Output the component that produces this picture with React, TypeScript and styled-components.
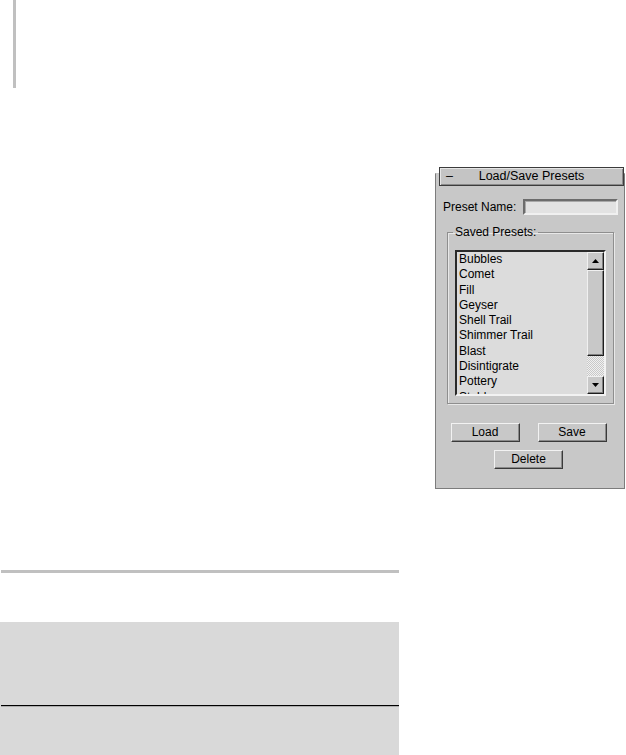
import React from "react";
import styled, { createGlobalStyle } from "styled-components";

const GlobalStyle = createGlobalStyle`
  html, body {
    margin: 0;
    padding: 0;
    background: #ffffff;
  }
  body {
    font-family: "Liberation Sans", Arial, sans-serif;
  }
`;

const Page = styled.div`
  display: flex;
  width: 626px;
  height: 755px;
  overflow: hidden;
  background: #ffffff;
`;

const LeftColumn = styled.div`
  width: 399px;
  display: flex;
  flex-direction: column;
`;

const MarginRule = styled.div`
  margin-left: 13px;
  width: 3px;
  height: 88px;
  background: #c0c0c0;
`;

const SectionRule = styled.div`
  margin: 482px 0 0 1px;
  height: 3px;
  background: #c0c0c0;
`;

const NoteBlock = styled.div`
  margin-top: 49px;
  flex: 1;
  background: #d9d9d9;
  padding-top: 83px;
`;

const NoteLine = styled.div`
  margin-left: 1px;
  height: 1px;
  background: #000000;
  box-shadow: 0 0.5px 0 rgba(0, 0, 0, 0.4);
`;

const RightColumn = styled.div`
  margin-left: 36px;
  padding-top: 173px;
`;

const Rollout = styled.div`
  width: 188px;
  height: 314px;
  background: #c8c8c8;
  border: 1px solid #7c7c7c;
  border-top-color: #c8c8c8;
  display: flex;
  flex-direction: column;
  font-size: 12px;
  color: #000;
`;

const TitleBar = styled.div`
  margin: -7px 0 0 3px;
  height: 17px;
  border: 1px solid #3c3c3c;
  box-shadow: inset 1px 1px 0 #e6e6e6, inset -1px -1px 0 #8a8a8a;
  background: #c4c4c4;
  display: flex;
  align-items: center;
  position: relative;
  justify-content: center;
  line-height: 17px;
  font-size: 12.5px;
`;

const Collapse = styled.span`
  position: absolute;
  left: 6px;
  top: 0;
`;

const NameRow = styled.div`
  margin: 13px 0 0 7px;
  display: flex;
  align-items: center;
  gap: 7px;
`;

const NameInput = styled.div`
  width: 91px;
  height: 12px;
  background: #e2e2e2;
  border: 2px solid;
  border-color: #6c6c6c #f0f0f0 #f0f0f0 #6c6c6c;
  box-shadow: inset 1px 1px 0 #a8a8a8;
`;

const GroupBox = styled.fieldset`
  margin: 10px 0 0 11px;
  width: 167px;
  height: 179px;
  padding: 0;
  border: 1px solid #8e8e8e;
  box-shadow: 1px 1px 0 #e8e8e8, inset 1px 1px 0 #e8e8e8;
  box-sizing: border-box;
  legend {
    margin-left: 5px;
    padding: 0 2px;
    line-height: 14px;
    font-size: 12px;
  }
`;

const ListBox = styled.div`
  margin: 11px 0 0 7px;
  width: 147px;
  height: 142px;
  border: 2px solid;
  border-color: #2a2a2a #f2f2f2 #f2f2f2 #2a2a2a;
  background: #dcdcdc;
  display: flex;
  overflow: hidden;
`;

const Items = styled.ul`
  flex: 1;
  margin: 0;
  padding: 0 0 0 2px;
  list-style: none;
  line-height: 15.3px;
  overflow: hidden;
`;

const ScrollBar = styled.div`
  width: 17px;
  display: flex;
  flex-direction: column;
`;

const ArrowButton = styled.div`
  height: 18px;
  box-sizing: border-box;
  background: #c8c8c8;
  border: 1px solid;
  border-color: #f0f0f0 #1e1e1e #1e1e1e #f0f0f0;
  box-shadow: inset -1px -1px 0 #808080;
  display: flex;
  align-items: center;
  justify-content: center;
`;

const Thumb = styled.div`
  height: 86px;
  box-sizing: border-box;
  background: #c8c8c8;
  border: 1px solid;
  border-color: #f0f0f0 #1e1e1e #1e1e1e #f0f0f0;
  box-shadow: inset -1px -1px 0 #808080;
`;

const Track = styled.div`
  flex: 1;
  background-color: #e6e6e6;
  background-image: repeating-conic-gradient(#c8c8c8 0 25%, #f0f0f0 0 50%);
  background-size: 2px 2px;
`;

const ButtonRow = styled.div<{ $top: number }>`
  margin-top: ${(p) => p.$top}px;
  display: flex;
  justify-content: center;
  gap: 18px;
  padding-right: 3px;
`;

const PushButton = styled.div<{ $width: number }>`
  width: ${(p) => p.$width}px;
  height: 19px;
  box-sizing: border-box;
  background: #c8c8c8;
  border: 1px solid;
  border-color: #f2f2f2 #3a3a3a #3a3a3a #f2f2f2;
  box-shadow: inset -1px -1px 0 #8a8a8a;
  display: flex;
  align-items: center;
  justify-content: center;
  line-height: 17px;
`;

const presets = [
  "Bubbles",
  "Comet",
  "Fill",
  "Geyser",
  "Shell Trail",
  "Shimmer Trail",
  "Blast",
  "Disintigrate",
  "Pottery",
  "Stable",
];

const Arrow = ({ up }: { up?: boolean }) => (
  <svg width="7" height="4" viewBox="0 0 7 4">
    <path d={up ? "M3.5 0 L7 4 L0 4 Z" : "M0 0 L7 0 L3.5 4 Z"} fill="#000" />
  </svg>
);

export default function App() {
  return (
    <Page>
      <GlobalStyle />
      <LeftColumn>
        <MarginRule />
        <SectionRule />
        <NoteBlock>
          <NoteLine />
        </NoteBlock>
      </LeftColumn>
      <RightColumn>
        <Rollout>
          <TitleBar>
            <Collapse>–</Collapse>
            Load/Save Presets
          </TitleBar>
          <NameRow>
            Preset Name:
            <NameInput />
          </NameRow>
          <GroupBox>
            <legend>Saved Presets:</legend>
            <ListBox>
              <Items>
                {presets.map((name) => (
                  <li key={name}>{name}</li>
                ))}
              </Items>
              <ScrollBar>
                <ArrowButton>
                  <Arrow up />
                </ArrowButton>
                <Thumb />
                <Track />
                <ArrowButton>
                  <Arrow />
                </ArrowButton>
              </ScrollBar>
            </ListBox>
          </GroupBox>
          <ButtonRow $top={19}>
            <PushButton $width={69}>Load</PushButton>
            <PushButton $width={69}>Save</PushButton>
          </ButtonRow>
          <ButtonRow $top={8}>
            <PushButton $width={69}>Delete</PushButton>
          </ButtonRow>
        </Rollout>
      </RightColumn>
    </Page>
  );
}
